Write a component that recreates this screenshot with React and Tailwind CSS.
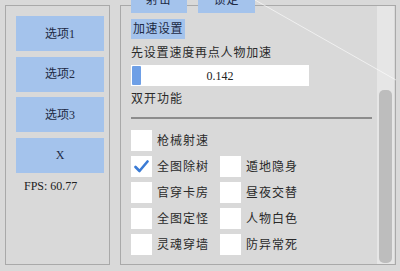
import React, { useState } from "react";

const serif = { fontFamily: '"Liberation Serif", "Noto Sans CJK SC", serif' };

const Check = ({ on, label, onToggle }) => (
    <div className="flex items-center gap-[5px] h-[21px]" onClick={onToggle}>
        <div className="w-[21px] h-[21px] bg-white flex items-center justify-center">
            {on && (
                <svg width="15" height="13" viewBox="0 0 15 13">
                    <path d="M1.5 7 L5.5 11 L13.5 1.5" fill="none" stroke="#3a7bd5" strokeWidth="2.6" strokeLinecap="round" strokeLinejoin="round" />
                </svg>
            )}
        </div>
        <span className="text-[12px] tracking-[1px] text-[#2a2a2a] leading-none">{label}</span>
    </div>
);

const App = () => {
    const [checked, setChecked] = useState({ 全图除树: true });
    const toggle = (k) => setChecked({ ...checked, [k]: !checked[k] });

    const rows = [
        ["枪械射速", null],
        ["全图除树", "遁地隐身"],
        ["官穿卡房", "昼夜交替"],
        ["全图定怪", "人物白色"],
        ["灵魂穿墙", "防异常死"],
    ];

    return (
        <div className="relative w-[400px] h-[271px] bg-[#d9d9d9] flex gap-[10px] pl-[5px] pt-[5px] overflow-hidden" style={serif}>
            {/* left menu */}
            <div className="w-[105px] h-[260px] border border-[#a9a9a9] pl-[10px] pt-[10px] flex flex-col">
                <div className="flex flex-col gap-[5.5px]">
                    {["选项1", "选项2", "选项3", "X"].map((t) => (
                        <button key={t} className="w-[88px] h-[35px] bg-[#a4c3ec] text-[#1d2a44] text-[12px] flex items-center justify-center">
                            {t}
                        </button>
                    ))}
                </div>
                <p className="mt-[6px] pl-[8px] text-[12px] text-[#222] leading-[14px]">FPS: 60.77</p>
            </div>

            {/* settings panel */}
            <div className="w-[276px] h-[260px] border border-[#a9a9a9] flex">
                <div className="flex-1 pl-[10px] flex flex-col">
                    <div className="flex gap-[11px] -mt-[19px]">
                        <div className="w-[56px] h-[26px] bg-[#a4c3ec] text-[12px] text-[#1d2a44] flex items-center justify-center tracking-[1px]">射击</div>
                        <div className="w-[57px] h-[26px] bg-[#a4c3ec] text-[12px] text-[#1d2a44] flex items-center justify-center tracking-[1px]">锁定</div>
                    </div>
                    <div className="mt-[6px] w-[54px] h-[20px] bg-[#a4c3ec] text-[12px] text-[#1d2a44] flex items-center justify-center tracking-[0.5px]">加速设置</div>
                    <p className="mt-[7px] text-[12px] tracking-[0.8px] text-[#2a2a2a] leading-[14px]">先设置速度再点人物加速</p>
                    <div className="mt-[5px] w-[178px] h-[21px] bg-white relative flex items-center justify-center">
                        <div className="absolute left-[1px] top-[1px] w-[9px] h-[19px] bg-[#6e9fe6] rounded-[1px]" />
                        <span className="text-[12px] text-[#222]">0.142</span>
                    </div>
                    <p className="mt-[6px] text-[12px] tracking-[1px] text-[#2a2a2a] leading-[14px]">双开功能</p>
                    <div className="mt-[11px] w-[241px] h-[2px] bg-[#8c8c8c]" />
                    <div className="mt-[11px] flex flex-col gap-[5px]">
                        {rows.map(([a, b]) => (
                            <div key={a} className="flex">
                                <div className="w-[89px]">
                                    <Check label={a} on={!!checked[a]} onToggle={() => toggle(a)} />
                                </div>
                                {b && <Check label={b} on={!!checked[b]} onToggle={() => toggle(b)} />}
                            </div>
                        ))}
                    </div>
                </div>
                {/* scrollbar */}
                <div className="w-[17px] mr-[1px] bg-[#e6e6e6] relative">
                    <div className="absolute left-[2px] right-[2px] top-[84px] bottom-[1px] bg-[#bdbdbd] rounded-[5px]" />
                </div>
            </div>

            {/* stray line from the scene behind */}
            <svg className="absolute left-0 top-0 pointer-events-none" width="400" height="271">
                <line x1="255" y1="0" x2="396" y2="80" stroke="#ffffff" strokeOpacity="0.6" strokeWidth="1" />
            </svg>
        </div>
    );
};

export default App;
